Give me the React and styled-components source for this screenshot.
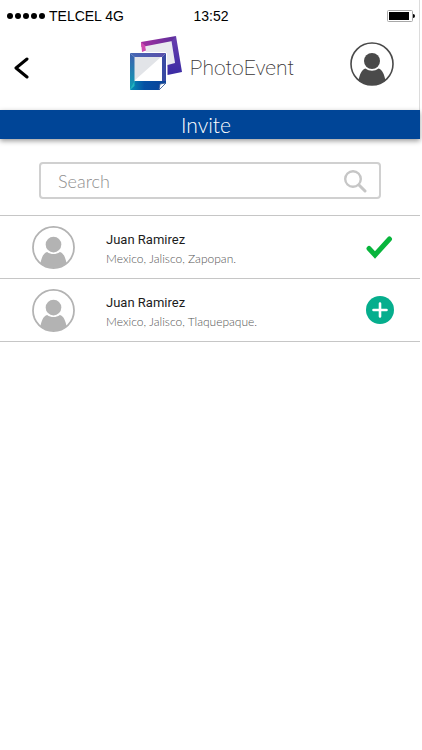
import React, { useState } from "react"
import styled, { createGlobalStyle } from "styled-components"


//STYLES
const GlobalStyle = createGlobalStyle`
* { box-sizing: border-box; }
body {
  margin: 0;
  background: #fff;
  font-family: Lato, "Open Sans", sans-serif;
}
button {
  padding: 0;
  border: 0;
  background: none;
  cursor: pointer;
}
svg { display: block; }
`

const Screen = styled.div`
min-height: 100vh;
padding-right: 2px;
background: #fff;
`

const Top = styled.header`
border-right: 1px solid #dcdcdc;
`

const StatusBar = styled.div`
display: grid;
grid-template-columns: 1fr auto 1fr;
align-items: center;
height: 32px;
padding: 0 4px 0 7px;
font-family: "Liberation Sans", Arial, sans-serif;
font-size: 14px;
line-height: 16px;
color: #000;
`

const Carrier = styled.div`
display: flex;
align-items: center;
gap: 4px;
`

const Signal = styled.div`
display: flex;
gap: 2px;
`

const Dot = styled.span`
width: 6px;
height: 6px;
border-radius: 50%;
background: #000;
`

const Battery = styled.div`
justify-self: end;
`

const NavBar = styled.div`
display: grid;
grid-template-columns: 1fr auto 1fr;
align-items: center;
height: 78px;
padding-bottom: 14px;
`

const BackButton = styled.button`
justify-self: start;
padding: 8px 11px 0;
`

const Brand = styled.a`
display: flex;
align-items: center;
gap: 8px;
padding-left: 4px;
color: #3a3637;
text-decoration: none;
`

const BrandName = styled.span`
padding-top: 8px;
font-family: Roboto, sans-serif;
font-size: 21px;
line-height: 28px;
font-weight: 200;
`

const ProfileButton = styled.button`
justify-self: end;
margin-right: 25px;
`

const Title = styled.h1`
margin: 0;
padding-right: 8px;
background: #004597;
box-shadow: 0 2px 5px rgba(0, 0, 0, 0.4);
color: #fff;
font-size: 21px;
line-height: 29px;
font-weight: 300;
text-align: center;
`

const SearchBox = styled.form`
display: flex;
align-items: center;
height: 37px;
margin: 23px 39px 16px;
padding: 0 12px 0 17px;
border: 2px solid #d0d0d0;
border-radius: 4px;
`

const SearchInput = styled.input`
flex: 1;
min-width: 0;
padding: 0;
border: 0;
outline: 0;
background: none;
font-family: inherit;
font-size: 18px;
line-height: 20px;
font-weight: 300;
color: #555;
&::placeholder {
  color: #8f8f8f;
  opacity: 1;
}
`

const People = styled.ul`
margin: 0;
padding: 0;
border-top: 1px solid #c6c6c6;
list-style: none;
`

const Person = styled.li`
display: flex;
align-items: center;
height: 63px;
padding: 0 26px 0 32px;
border-bottom: 1px solid #c6c6c6;
`

const Info = styled.div`
flex: 1;
padding: 3px 0 0 31px;
`

const Name = styled.div`
font-family: Roboto, sans-serif;
font-size: 13px;
line-height: 19px;
color: #1c1c1c;
`

const Place = styled.div`
font-size: 12px;
line-height: 19px;
font-weight: 300;
color: #555;
`
//END STYLES


const Avatar = ({ size, color, stroke }) => (
  <svg width={size} height={size} viewBox="0 0 44 44" aria-hidden="true">
    <circle cx="22" cy="22" r="21" fill="none" stroke={color} strokeWidth={stroke} />
    <circle cx="22" cy="19" r="8" fill={color} />
    <path
      d="M8.5 38.5C9.8 32.5 11.5 27.5 15.5 26.5C19.5 29.4 24.5 29.4 28.5 26.5C32.5 27.5 34.2 32.5 35.5 38.5C27.5 44.5 16.5 44.5 8.5 38.5Z"
      fill={color}
    />
  </svg>
)

const Logo = () => (
  <svg width="53" height="56" viewBox="0 0 53 56" aria-hidden="true">
    <defs>
      <linearGradient id="backTop" x1="0" y1="0" x2="1" y2="0">
        <stop offset="0" stopColor="#a52fa0" />
        <stop offset="1" stopColor="#5a2f9c" />
      </linearGradient>
      <linearGradient id="backSide" x1="0" y1="0" x2="0" y2="1">
        <stop offset="0" stopColor="#6a3fae" />
        <stop offset="1" stopColor="#3a2ba4" />
      </linearGradient>
      <linearGradient id="frontSide" x1="0" y1="0" x2="0" y2="1">
        <stop offset="0" stopColor="#3f5fae" />
        <stop offset="1" stopColor="#0aa0b4" />
      </linearGradient>
      <linearGradient id="frontTop" x1="0" y1="0" x2="1" y2="0">
        <stop offset="0" stopColor="#4468b4" />
        <stop offset="1" stopColor="#5c4eaa" />
      </linearGradient>
      <linearGradient id="frontBottom" x1="0" y1="0" x2="1" y2="0">
        <stop offset="0" stopColor="#0590b6" />
        <stop offset="0.4" stopColor="#0550a4" />
        <stop offset="1" stopColor="#0b4298" />
      </linearGradient>
    </defs>
    <path d="M16 10L43 4L46 29L38 31V17H17Z" fill="#e9eaef" />
    <path d="M12 6L47 0L46 4.500L12.500 11Z" fill="url(#backTop)" />
    <path d="M12 6L16 9.500L17 14.500L13 16Z" fill="#d04bb0" />
    <path d="M47 0L53 36L38.500 39V29L46 27L42.500 5Z" fill="url(#backSide)" />
    <path d="M0 16H37V54H0Z" fill="#fff" />
    <path d="M5 21H32L5 45Z" fill="#e2e4e8" />
    <path d="M1 17L5.500 21V46L1 54Z" fill="url(#frontSide)" />
    <path d="M1 17H37L33 21H5.500Z" fill="url(#frontTop)" />
    <path d="M37 17V46H33V21Z" fill="#394aa3" />
    <path d="M1 54L5.500 45H37V47L30 54Z" fill="url(#frontBottom)" />
    <path d="M1 54L5.500 45V50Z" fill="#20b5bd" />
    <path d="M30 54L31 48L37 47Z" fill="#fff" stroke="#2f5598" strokeWidth="0.8" />
  </svg>
)

const Check = () => (
  <svg width="28" height="28" viewBox="0 0 28 28" aria-hidden="true">
    <path d="M3 15.500L9 22L23.500 6" fill="none" stroke="#08b53c" strokeWidth="5" strokeLinecap="round" />
  </svg>
)

const Plus = () => (
  <svg width="28" height="28" viewBox="0 0 28 28" aria-hidden="true">
    <circle cx="14" cy="14" r="14" fill="#05ae8d" />
    <path d="M14 7.500V20.500M7.500 14H20.500" stroke="#fff" strokeWidth="2.600" strokeLinecap="round" />
  </svg>
)

const people = [
  { id: 1, name: "Juan Ramirez", place: "Mexico, Jalisco, Zapopan.", invited: true },
  { id: 2, name: "Juan Ramirez", place: "Mexico, Jalisco, Tlaquepaque.", invited: false },
]


const App = () => {
  const [list, setList] = useState(people)

  const toggle = (id) =>
    setList(list.map((p) => (p.id === id ? { ...p, invited: !p.invited } : p)))

  return (
    <Screen>
      <GlobalStyle />
      <Top>
        <StatusBar>
          <Carrier>
            <Signal>
              <Dot /><Dot /><Dot /><Dot /><Dot />
            </Signal>
            TELCEL 4G
          </Carrier>
          <span>13:52</span>
          <Battery>
            <svg width="28" height="12" viewBox="0 0 28 12" aria-hidden="true">
              <rect x="0.500" y="0.500" width="25" height="11" rx="1" fill="#fff" stroke="#a8a8a8" />
              <rect x="2" y="2" width="20" height="8" fill="#000" />
              <path d="M26 4Q28 4 28 6Q28 8 26 8Z" fill="#000" />
            </svg>
          </Battery>
        </StatusBar>
        <NavBar>
          <BackButton type="button" aria-label="Back">
            <svg width="18" height="24" viewBox="0 0 18 24" aria-hidden="true">
              <path d="M16 3L5 12L16 21" fill="none" stroke="#000" strokeWidth="3" strokeLinecap="round" strokeLinejoin="round" />
            </svg>
          </BackButton>
          <Brand href="#">
            <Logo />
            <BrandName>PhotoEvent</BrandName>
          </Brand>
          <ProfileButton type="button" aria-label="Profile">
            <Avatar size={44} color="#4a4a4a" stroke={1.6} />
          </ProfileButton>
        </NavBar>
      </Top>
      <Title>Invite</Title>
      <SearchBox role="search" onSubmit={(e) => e.preventDefault()}>
        <SearchInput type="text" placeholder="Search" aria-label="Search" />
        <button type="submit" aria-label="Submit search">
          <svg width="24" height="24" viewBox="0 0 24 24" aria-hidden="true">
            <circle cx="10" cy="10" r="7.800" fill="none" stroke="#c6c6c6" strokeWidth="2.400" />
            <path d="M16 16L22 22" stroke="#c6c6c6" strokeWidth="3" strokeLinecap="round" />
          </svg>
        </button>
      </SearchBox>
      <People>
        {list.map((p) => (
          <Person key={p.id}>
            <Avatar size={43} color="#b3b3b3" stroke={1.8} />
            <Info>
              <Name>{p.name}</Name>
              <Place>{p.place}</Place>
            </Info>
            <button
              type="button"
              aria-pressed={p.invited}
              aria-label={p.invited ? "Invited" : "Invite"}
              onClick={() => toggle(p.id)}
            >
              {p.invited ? <Check /> : <Plus />}
            </button>
          </Person>
        ))}
      </People>
    </Screen>
  )
}

export default App
